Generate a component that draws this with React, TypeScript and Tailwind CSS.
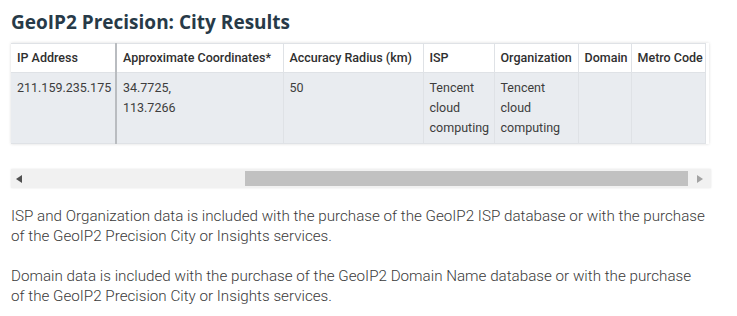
import React from "react";

const columns = [
  { label: "IP Address", w: "w-[105px]", thick: true },
  { label: "Approximate Coordinates*", w: "w-[167px]" },
  { label: "Accuracy Radius (km)", w: "w-[140px]" },
  { label: "ISP", w: "w-[71px]" },
  { label: "Organization", w: "w-[84px]" },
  { label: "Domain", w: "w-[53px]" },
  { label: "Metro Code", w: "w-[74px]" },
];

const row: React.ReactNode[] = [
  "211.159.235.175",
  <>
    34.7725,
    <br />
    113.7266
  </>,
  "50",
  "Tencent cloud computing",
  "Tencent cloud computing",
  "",
  "",
];

function App() {
  return (
    <div className="w-[737px] h-[316px] bg-white px-[11px] pt-[10px] font-['Roboto',sans-serif] text-[#333]">
      <h2 className="font-['Open_Sans',sans-serif] font-bold text-[19px] leading-[24px] text-[#273a48]">
        GeoIP2 Precision: City Results
      </h2>

      <div className="mt-[9px] w-[698px] overflow-hidden shadow-[0_0_3px_rgba(0,0,0,0.14)]">
        <table className="w-[694px] table-fixed border-collapse text-[12.5px] leading-[20px]">
          <thead>
            <tr className="bg-white">
              {columns.map((c) => (
                <th
                  key={c.label}
                  className={`${c.w} text-left font-medium text-[#2f2f2f] whitespace-nowrap pl-[6px] pr-[2px] py-[4px] border-t border-[#dfe2e6] ${
                    c.thick ? "border-r-2 border-r-[#b9bcc0]" : "border-r"
                  }`}
                >
                  {c.label}
                </th>
              ))}
            </tr>
          </thead>
          <tbody>
            <tr className="bg-[#e9ecf0]">
              {row.map((v, i) => (
                <td
                  key={i}
                  className={`${columns[i].w} align-top pl-[6px] pr-[2px] pt-[5px] pb-[5px] border-t border-b border-[#dfe2e6] text-[#3d3d3d] ${
                    columns[i].thick ? "border-r-2 border-r-[#b9bcc0]" : "border-r"
                  }`}
                >
                  {v}
                </td>
              ))}
            </tr>
          </tbody>
        </table>
      </div>

      {/* fake horizontal scrollbar */}
      <div className="mt-[25px] w-[700px] h-[19px] flex bg-[#f1f1f1] shadow-[0_0_2px_rgba(0,0,0,0.1)]">
        <div className="w-[16px] flex items-center justify-center">
          <svg width="6" height="8" viewBox="0 0 6 8">
            <polygon points="6,0 0,4 6,8" fill="#505050" />
          </svg>
        </div>
        <div className="w-[218px]" />
        <div className="w-[443px] my-[2px] bg-[#c1c1c1]" />
        <div className="w-[23px] flex items-center justify-center">
          <svg width="6" height="8" viewBox="0 0 6 8">
            <polygon points="0,0 6,4 0,8" fill="#a3a3a3" />
          </svg>
        </div>
      </div>

      <div className="mt-[18px] w-[715px] text-[15.2px] leading-[20px] text-[#3a3a3a] font-light">
        <p>
          ISP and Organization data is included with the purchase of the GeoIP2 ISP database or with the purchase
          <br />
          of the GeoIP2 Precision City or Insights services.
        </p>
        <p className="mt-[20px]">
          Domain data is included with the purchase of the GeoIP2 Domain Name database or with the purchase
          <br />
          of the GeoIP2 Precision City or Insights services.
        </p>
      </div>
    </div>
  );
}

export default App;
